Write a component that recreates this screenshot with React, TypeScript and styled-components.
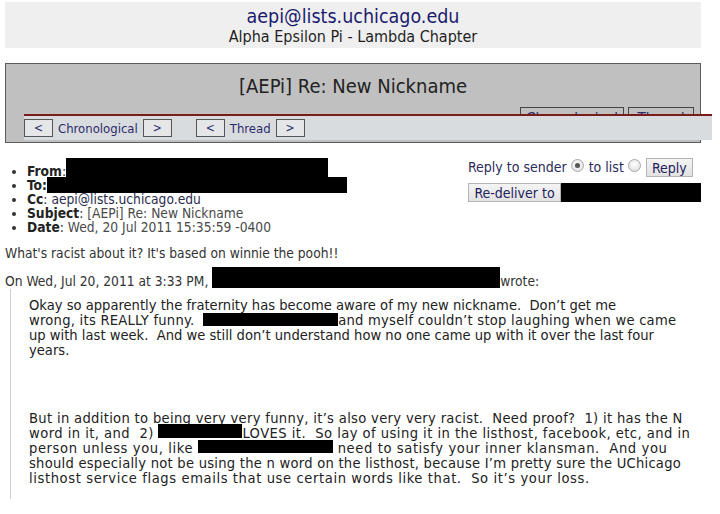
import React from "react";
import styled, { createGlobalStyle } from "styled-components";

const GlobalStyle = createGlobalStyle`
  body {
    margin: 0;
    background: #ffffff;
    font-family: "DejaVu Sans Condensed", "DejaVu Sans", sans-serif;
    font-stretch: condensed;
    color: #333333;
  }
`;

const Page = styled.div`
  width: 696px;
  padding: 2px 19px 0 5px;
`;

// Bandeau de la liste
const ListHeader = styled.div`
  background: #efefef;
  height: 46px;
  box-sizing: border-box;
  padding-top: 5px;
  text-align: center;
`;

const ListAddress = styled.div`
  font-size: 19.5px;
  line-height: 20px;
  color: #1b1b6e;
`;

const ListName = styled.div`
  font-size: 16px;
  line-height: 19px;
  color: #1e1e1e;
`;

// Boîte grise du sujet, avec la barre de navigation par-dessus
const SubjectBox = styled.div`
  position: relative;
  margin-top: 15px;
  height: 78px;
  background: #c0c0c0;
  border: 1px solid #5a5a5a;
`;

const SubjectTitle = styled.h1`
  margin: 0;
  padding-top: 10px;
  font-size: 20px;
  line-height: 24px;
  font-weight: normal;
  text-align: center;
  color: #222222;
`;

const HiddenButtons = styled.div`
  display: flex;
  justify-content: flex-end;
  gap: 4px;
  margin-top: 9px;
  padding-right: 6px;
`;

const GrayButton = styled.span<{ $w: number }>`
  display: block;
  width: ${({ $w }) => $w}px;
  height: 20px;
  box-sizing: border-box;
  border: 1px solid #444444;
  font-size: 15px;
  line-height: 22px;
  text-align: center;
  color: #2a2a6a;
`;

const NavBar = styled.div`
  position: absolute;
  left: 18px;
  top: 50px;
  width: 688px;
  height: 24px;
  background: #d9dcdf;
  border-top: 2px solid #7a1c1c;
  display: flex;
  align-items: center;
  font-size: 13px;
  color: #2b2b6b;
`;

const NavGroup = styled.div`
  display: flex;
  align-items: center;
  gap: 5px;
  & + & {
    margin-left: 24px;
  }
`;

const ArrowButton = styled.span`
  display: block;
  width: 29px;
  height: 18px;
  box-sizing: border-box;
  border: 1px solid #555555;
  background: #e4e6e8;
  text-align: center;
  line-height: 16px;
  font-size: 12px;
  color: #2b2b6b;
`;

const HeaderRow = styled.div`
  display: flex;
  justify-content: space-between;
  margin-top: 15px;
`;

const Fields = styled.ul`
  margin: 0;
  padding: 6px 0 0 22px;
  font-size: 13.7px;
  line-height: 14px;
  color: #333333;
`;

const Field = styled.li`
  white-space: nowrap;
`;

const Label = styled.b`
  color: #222222;
`;

const Value = styled.span<{ $muted?: boolean }>`
  color: ${({ $muted }) => ($muted ? "#4a4a4a" : "#2c2c4c")};
`;

// Bande noire de caviardage, posée dans le flux sans agrandir la ligne
const Redact = styled.span<{ $w: number; $h: number; $up: number }>`
  display: inline-block;
  width: ${({ $w }) => $w}px;
  height: ${({ $h }) => $h}px;
  background: #000000;
  vertical-align: top;
  margin-top: ${({ $up }) => -$up}px;
  margin-bottom: ${({ $h, $up }) => -($h - $up)}px;
`;

const ReplyPanel = styled.div`
  width: 233px;
  font-size: 14px;
  color: #2b2b5b;
`;

const ReplyLine = styled.div`
  display: flex;
  align-items: center;
  height: 18px;
`;

const Radio = styled.span<{ $checked?: boolean }>`
  position: relative;
  display: inline-block;
  width: 11px;
  height: 11px;
  margin: -4px 5px 0 4px;
  border-radius: 50%;
  border: 1px solid #a8a8a8;
  background: radial-gradient(circle at 50% 40%, #ffffff, #d8d8d8);
  &::after {
    content: "";
    display: ${({ $checked }) => ($checked ? "block" : "none")};
    position: absolute;
    left: 3px;
    top: 3px;
    width: 5px;
    height: 5px;
    border-radius: 50%;
    background: #555555;
  }
`;

const PlainButton = styled.span<{ $w: number }>`
  display: block;
  width: ${({ $w }) => $w}px;
  height: 19px;
  box-sizing: border-box;
  border: 1px solid #b4b4b4;
  background: linear-gradient(#f4f4f4, #e2e2e2);
  font-size: 14px;
  line-height: 18px;
  text-align: center;
  color: #22225a;
`;

const RedeliverLine = styled.div`
  display: flex;
  margin-top: 7px;
`;

const RedeliverBox = styled.span`
  display: block;
  width: 140px;
  height: 19px;
  background: #000000;
`;

const Message = styled.p<{ $gap: number }>`
  margin: ${({ $gap }) => $gap}px 0 0;
  font-size: 13.7px;
  line-height: 15px;
  color: #333333;
  white-space: nowrap;
`;

const Quote = styled.blockquote`
  margin: 0 0 0 5px;
  padding: 8px 0 14px 18px;
  border-left: 1px solid #cfcfcf;
  font-size: 14.6px;
  line-height: 15px;
  color: #222222;
`;

const QuotePara = styled.div`
  & + & {
    margin-top: 53px;
  }
`;

// Chaque ligne garde la coupure du message d'origine
const QLine = styled.div<{ $ls?: number }>`
  white-space: pre;
  letter-spacing: ${({ $ls }) => $ls ?? 0}px;
`;

const App: React.FC = () => (
  <>
    <GlobalStyle />
    <Page>
      <ListHeader>
        <ListAddress>aepi@lists.uchicago.edu</ListAddress>
        <ListName>Alpha Epsilon Pi - Lambda Chapter</ListName>
      </ListHeader>

      <SubjectBox>
        <SubjectTitle>[AEPi] Re: New Nickname</SubjectTitle>
        <HiddenButtons>
          <GrayButton $w={104}>Chronological</GrayButton>
          <GrayButton $w={66}>Thread</GrayButton>
        </HiddenButtons>
        <NavBar>
          <NavGroup>
            <ArrowButton>&lt;</ArrowButton>
            <span>Chronological</span>
            <ArrowButton>&gt;</ArrowButton>
          </NavGroup>
          <NavGroup>
            <ArrowButton>&lt;</ArrowButton>
            <span>Thread</span>
            <ArrowButton>&gt;</ArrowButton>
          </NavGroup>
        </NavBar>
      </SubjectBox>

      <HeaderRow>
        <Fields>
          <Field>
            <Label>From</Label>:<Redact $w={262} $h={19} $up={6} />
          </Field>
          <Field>
            <Label>To:</Label>
            <Redact $w={300} $h={16} $up={1} />
          </Field>
          <Field>
            <Label>Cc</Label>: <Value>aepi@lists.uchicago.edu</Value>
          </Field>
          <Field>
            <Label>Subject</Label>: <Value $muted>[AEPi] Re: New Nickname</Value>
          </Field>
          <Field>
            <Label>Date</Label>: <Value $muted>Wed, 20 Jul 2011 15:35:59 -0400</Value>
          </Field>
        </Fields>

        <ReplyPanel>
          <ReplyLine>
            Reply to sender
            <Radio $checked />
            to list
            <Radio />
            <PlainButton $w={47}>Reply</PlainButton>
          </ReplyLine>
          <RedeliverLine>
            <PlainButton $w={93}>Re-deliver to</PlainButton>
            <RedeliverBox />
          </RedeliverLine>
        </ReplyPanel>
      </HeaderRow>

      <Message $gap={12}>What's racist about it? It's based on winnie the pooh!!</Message>
      <Message $gap={13}>
        On Wed, Jul 20, 2011 at 3:33 PM, <Redact $w={288} $h={21} $up={7} />wrote:
      </Message>

      <Quote>
        <QuotePara>
          <QLine>Okay so apparently the fraternity has become aware of my new nickname.  Don’t get me</QLine>
          <QLine $ls={0.25}>
            wrong, its REALLY funny.  <Redact $w={135} $h={13} $up={-1} />and myself couldn’t stop laughing when we came
          </QLine>
          <QLine>up with last week.  And we still don’t understand how no one came up with it over the last four</QLine>
          <QLine>years.</QLine>
        </QuotePara>
        <QuotePara>
          <QLine $ls={0.32}>But in addition to being very very funny, it’s also very very racist.  Need proof?  1) it has the N</QLine>
          <QLine $ls={0.45}>
            word in it, and  2) <Redact $w={84} $h={14} $up={1} />LOVES it.  So lay of using it in the listhost, facebook, etc, and in
          </QLine>
          <QLine $ls={0.6}>
            person unless you, like <Redact $w={135} $h={13} $up={0} /> need to satisfy your inner klansman.  And you
          </QLine>
          <QLine $ls={0.25}>should especially not be using the n word on the listhost, because I’m pretty sure the UChicago</QLine>
          <QLine $ls={0.6}>listhost service flags emails that use certain words like that.  So it’s your loss.</QLine>
        </QuotePara>
      </Quote>
    </Page>
  </>
);

export default App;
